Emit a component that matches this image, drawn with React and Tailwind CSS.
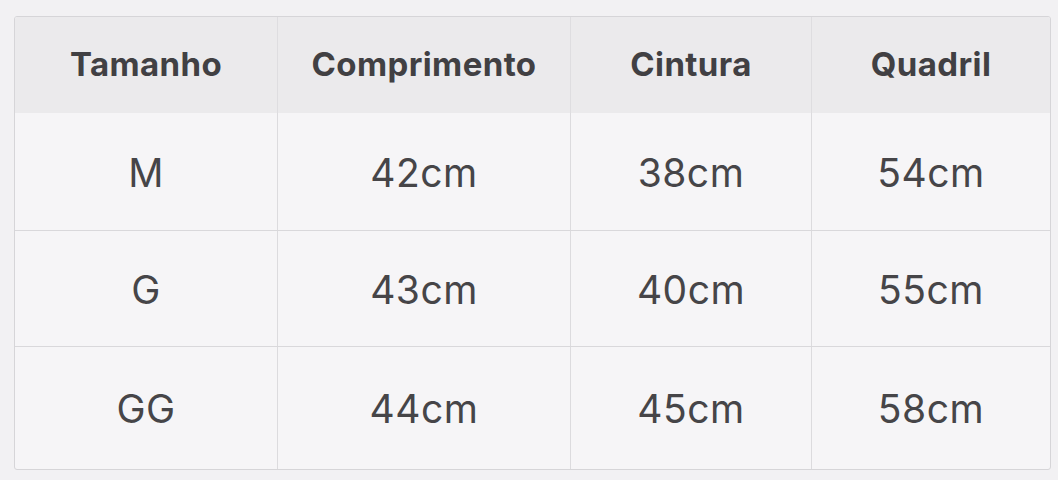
const headers = ['Tamanho', 'Comprimento', 'Cintura', 'Quadril'];

const rows = [
  { size: 'M', values: ['42cm', '38cm', '54cm'], h: 'h-[117px]' },
  { size: 'G', values: ['43cm', '40cm', '55cm'], h: 'h-[116px]' },
  { size: 'GG', values: ['44cm', '45cm', '58cm'], h: 'h-[123px]' },
];

export default function App() {
  return (
    <div
      className="w-[1058px] h-[480px] bg-[#f2f1f3] pt-[16px] pl-[14px] pr-[7px] pb-[10px]"
      style={{ fontFamily: 'Inter, Lato, "Noto Sans", sans-serif' }}
    >
      <div className="h-full border border-[#d6d5d8] rounded-[3px] overflow-hidden bg-[#f6f5f7]">
        <div className="grid grid-cols-[262px_293px_241px_1fr] h-[96px] bg-[#ebeaec]">
          {headers.map((h, i) => (
            <div
              key={h}
              className={`flex items-center justify-center text-[33px] font-bold text-[#414043] tracking-[0.4px] ${
                i > 0 ? 'border-l border-[#dedde0]' : ''
              }`}
            >
              {h}
            </div>
          ))}
        </div>
        {rows.map((row, r) => (
          <div
            key={row.size}
            className={`grid grid-cols-[262px_293px_241px_1fr] ${row.h} ${
              r > 0 ? 'border-t border-[#d9d8db]' : ''
            }`}
          >
            {[row.size, ...row.values].map((v, i) => (
              <div
                key={i}
                className={`flex items-center justify-center pt-[3px] text-[39px] text-[#464548] tracking-[0.5px] ${
                  i > 0 ? 'border-l border-[#dcdbde]' : ''
                }`}
              >
                {v}
              </div>
            ))}
          </div>
        ))}
      </div>
    </div>
  );
}
